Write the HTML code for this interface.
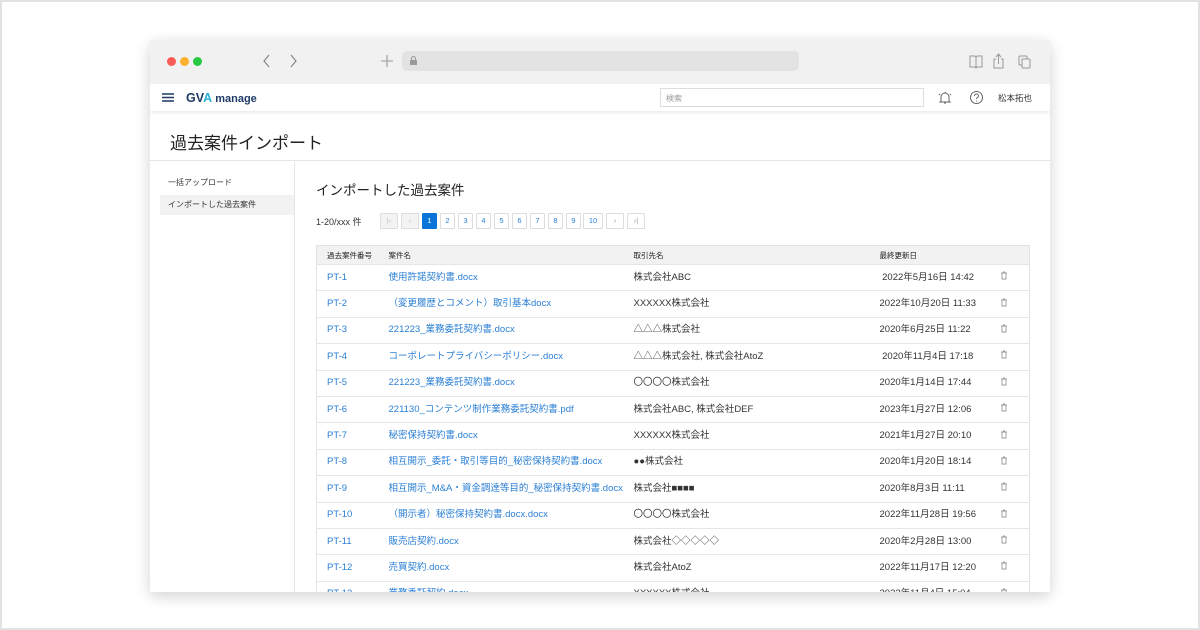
<!DOCTYPE html>
<html><head><meta charset="utf-8"><style>
*{box-sizing:border-box;margin:0;padding:0}
body{width:1200px;height:630px;background:#fff;font-family:"Liberation Sans","Noto Sans CJK JP",sans-serif;position:relative;overflow:hidden;color:#333}
.frame{position:absolute;inset:0;border:2px solid #e2e2e2}
.win{position:absolute;left:150px;top:40px;width:900px;height:552px;background:#fff;box-shadow:0 4px 14px rgba(0,0,0,.18);overflow:hidden}
.chrome{height:44px;background:#f1f1f1;position:relative}
.dot{position:absolute;top:17px;width:9px;height:9px;border-radius:50%}
.url{position:absolute;left:252px;top:11px;width:397px;height:20px;background:#e3e3e3;border-radius:5px}
.nav{position:absolute;top:44px;left:0;right:0;height:27px;background:#fff;box-shadow:0 2px 3px rgba(0,0,0,.08);font-size:10px}
.title{position:absolute;top:71px;left:0;right:0;height:50px;border-bottom:1px solid #e5e5e5;font-size:17px;padding:18px 0 0 20px;color:#222}
.side{position:absolute;top:122px;left:0;width:145px;bottom:0;border-right:1px solid #e5e5e5;font-size:8px}
.side div{height:20px;line-height:20px;padding-left:8px;margin-left:10px}
.main{position:absolute;left:166px;top:122px;right:0;bottom:0}
h2{font-size:13.5px;font-weight:normal;position:absolute;top:17px;left:0;color:#222}
.pg{position:absolute;top:51px;height:16px;border:1px solid #ddd;font-size:7.5px;color:#2a7fd4;text-align:center;line-height:14px;border-radius:1px}
table{position:absolute;left:0;top:83px;width:714px;border-collapse:collapse;border:1px solid #e2e2e2;font-size:9.5px}
th{background:#f2f2f2;font-weight:normal;font-size:7.5px;height:19px;text-align:left;color:#222;vertical-align:middle}
td{height:26.4px;border-top:1px solid #e6e6e6;color:#333;vertical-align:middle;line-height:12px;white-space:nowrap}
td.a,td.b{color:#2a7fd4}
td.a{padding-left:10px}
</style></head><body>
<div class="frame"></div>
<svg width="0" height="0" style="position:absolute"><defs><symbol id="tr" viewBox="0 0 8 9"><path d="M1 2h6M3 1h2M2 2v6h4V2" fill="none" stroke="#999" stroke-width=".9"/></symbol></defs></svg>
<div class="win">
 <div class="chrome">
  <div class="dot" style="left:17px;background:#fb5b57"></div>
  <div class="dot" style="left:30px;background:#fdb02e"></div>
  <div class="dot" style="left:43px;background:#28c840"></div>
  <svg style="position:absolute;left:112px;top:14px" width="40" height="14" fill="none" stroke="#888" stroke-width="1.2"><path d="M7 1L2 7l5 6M29 1l5 6-5 6"/></svg>
  <svg style="position:absolute;left:230px;top:14px" width="14" height="14" stroke="#999" stroke-width="1.1"><path d="M7 1v12M1 7h12"/></svg>
  <div class="url"><svg style="position:absolute;left:8px;top:5px" width="7" height="9"><rect x="0" y="4" width="7" height="5" fill="#999"/><path d="M1.5 4V2.5a2 2 0 014 0V4" stroke="#999" fill="none"/></svg></div>
  <svg style="position:absolute;left:818px;top:13px" width="70" height="18" fill="none" stroke="#999" stroke-width="1"><path d="M2 3h5l1 1 1-1h5v11H9l-1 1-1-1H2zM8 4v11"/><path d="M28 6h-2v9h9V6h-2M30.5 1v10M28 4l2.5-3 2.5 3"/><rect x="51" y="3" width="8" height="9" rx="1"/><rect x="54" y="6" width="8" height="9" rx="1" fill="#f1f1f1"/></svg>
 </div>
 <div class="nav">
  <svg style="position:absolute;left:12px;top:9px" width="12" height="9" stroke="#1f3a66" stroke-width="1.5"><path d="M0 1h12M0 4.5h12M0 8h12"/></svg>
  <div style="position:absolute;left:36px;top:7px;font-size:12.5px;font-weight:bold;color:#1f3a66">GV<span style="color:#2ab0d8">A</span> <span style="font-size:11px">manage</span></div>
  <div style="position:absolute;left:510px;top:4px;width:264px;height:19px;border:1px solid #ddd;font-size:8px;color:#999;padding:4px 5px">検索</div>
  <svg style="position:absolute;left:787px;top:6px" width="16" height="15" fill="none" stroke="#666" stroke-width="1"><path d="M4 11V7a4 4 0 018 0v4l1 1H3zM7 13h2M8 2v1M2 4l1 1M14 4l-1 1"/></svg>
  <svg style="position:absolute;left:819px;top:6px" width="15" height="15" fill="none" stroke="#666" stroke-width="1"><circle cx="7.5" cy="7.5" r="6"/><path d="M5.5 6a2 2 0 114 0c0 1.5-2 1.5-2 3M7.5 10.5v1"/></svg>
  <div style="position:absolute;left:848px;top:8px;font-size:8.5px;color:#333">松本拓也</div>
 </div>
 <div class="title">過去案件インポート</div>
 <div class="side">
  <div style="margin-top:11px">一括アップロード</div>
  <div style="background:#f2f2f2;margin-top:2px">インポートした過去案件</div>
 </div>
 <div class="main">
  <h2>インポートした過去案件</h2>
  <div style="position:absolute;top:53px;left:0;font-size:9px">1-20/xxx 件</div>
  <div class="pg" style="left:64px;width:18px;background:#f3f3f3;color:#bbb">|‹</div>
  <div class="pg" style="left:85px;width:18px;background:#f3f3f3;color:#bbb">‹</div>
  <div class="pg" style="left:106px;width:15px;background:#0b74d9;color:#fff;border-color:#0b74d9">1</div>
  <div class="pg" style="left:124px;width:15px">2</div>
  <div class="pg" style="left:142px;width:15px">3</div>
  <div class="pg" style="left:160px;width:15px">4</div>
  <div class="pg" style="left:178px;width:15px">5</div>
  <div class="pg" style="left:196px;width:15px">6</div>
  <div class="pg" style="left:214px;width:15px">7</div>
  <div class="pg" style="left:232px;width:15px">8</div>
  <div class="pg" style="left:250px;width:15px">9</div>
  <div class="pg" style="left:267px;width:20px">10</div>
  <div class="pg" style="left:290px;width:18px;color:#999">›</div>
  <div class="pg" style="left:311px;width:18px;color:#999">›|</div>
  <table>
   <tr><th style="width:72px;padding-left:10px">過去案件番号</th><th style="width:245px">案件名</th><th style="width:246px">取引先名</th><th>最終更新日</th><th style="width:30px"></th></tr>
   <tr><td class="a">PT-1</td><td class="b">使用許諾契約書.docx</td><td>株式会社ABC</td><td>&nbsp;2022年5月16日 14:42</td><td><svg width="8" height="9"><use href="#tr"/></svg></td></tr>
   <tr><td class="a">PT-2</td><td class="b">（変更履歴とコメント）取引基本docx</td><td>XXXXXX株式会社</td><td>2022年10月20日 11:33</td><td><svg width="8" height="9"><use href="#tr"/></svg></td></tr>
   <tr><td class="a">PT-3</td><td class="b">221223_業務委託契約書.docx</td><td>△△△株式会社</td><td>2020年6月25日 11:22</td><td><svg width="8" height="9"><use href="#tr"/></svg></td></tr>
   <tr><td class="a">PT-4</td><td class="b">コーポレートプライバシーポリシー.docx</td><td>△△△株式会社, 株式会社AtoZ</td><td>&nbsp;2020年11月4日 17:18</td><td><svg width="8" height="9"><use href="#tr"/></svg></td></tr>
   <tr><td class="a">PT-5</td><td class="b">221223_業務委託契約書.docx</td><td>〇〇〇〇株式会社</td><td>2020年1月14日 17:44</td><td><svg width="8" height="9"><use href="#tr"/></svg></td></tr>
   <tr><td class="a">PT-6</td><td class="b">221130_コンテンツ制作業務委託契約書.pdf</td><td>株式会社ABC, 株式会社DEF</td><td>2023年1月27日 12:06</td><td><svg width="8" height="9"><use href="#tr"/></svg></td></tr>
   <tr><td class="a">PT-7</td><td class="b">秘密保持契約書.docx</td><td>XXXXXX株式会社</td><td>2021年1月27日 20:10</td><td><svg width="8" height="9"><use href="#tr"/></svg></td></tr>
   <tr><td class="a">PT-8</td><td class="b">相互開示_委託・取引等目的_秘密保持契約書.docx</td><td>●●株式会社</td><td>2020年1月20日 18:14</td><td><svg width="8" height="9"><use href="#tr"/></svg></td></tr>
   <tr><td class="a">PT-9</td><td class="b">相互開示_M&amp;A・資金調達等目的_秘密保持契約書.docx</td><td>株式会社■■■■</td><td>2020年8月3日 11:11</td><td><svg width="8" height="9"><use href="#tr"/></svg></td></tr>
   <tr><td class="a">PT-10</td><td class="b">（開示者）秘密保持契約書.docx.docx</td><td>〇〇〇〇株式会社</td><td>2022年11月28日 19:56</td><td><svg width="8" height="9"><use href="#tr"/></svg></td></tr>
   <tr><td class="a">PT-11</td><td class="b">販売店契約.docx</td><td>株式会社◇◇◇◇◇</td><td>2020年2月28日 13:00</td><td><svg width="8" height="9"><use href="#tr"/></svg></td></tr>
   <tr><td class="a">PT-12</td><td class="b">売買契約.docx</td><td>株式会社AtoZ</td><td>2022年11月17日 12:20</td><td><svg width="8" height="9"><use href="#tr"/></svg></td></tr>
   <tr><td class="a">PT-13</td><td class="b">業務委託契約.docx</td><td>XXXXXX株式会社</td><td>2022年11月4日 15:04</td><td><svg width="8" height="9"><use href="#tr"/></svg></td></tr>
  </table>
 </div>
</div>
</body></html>
